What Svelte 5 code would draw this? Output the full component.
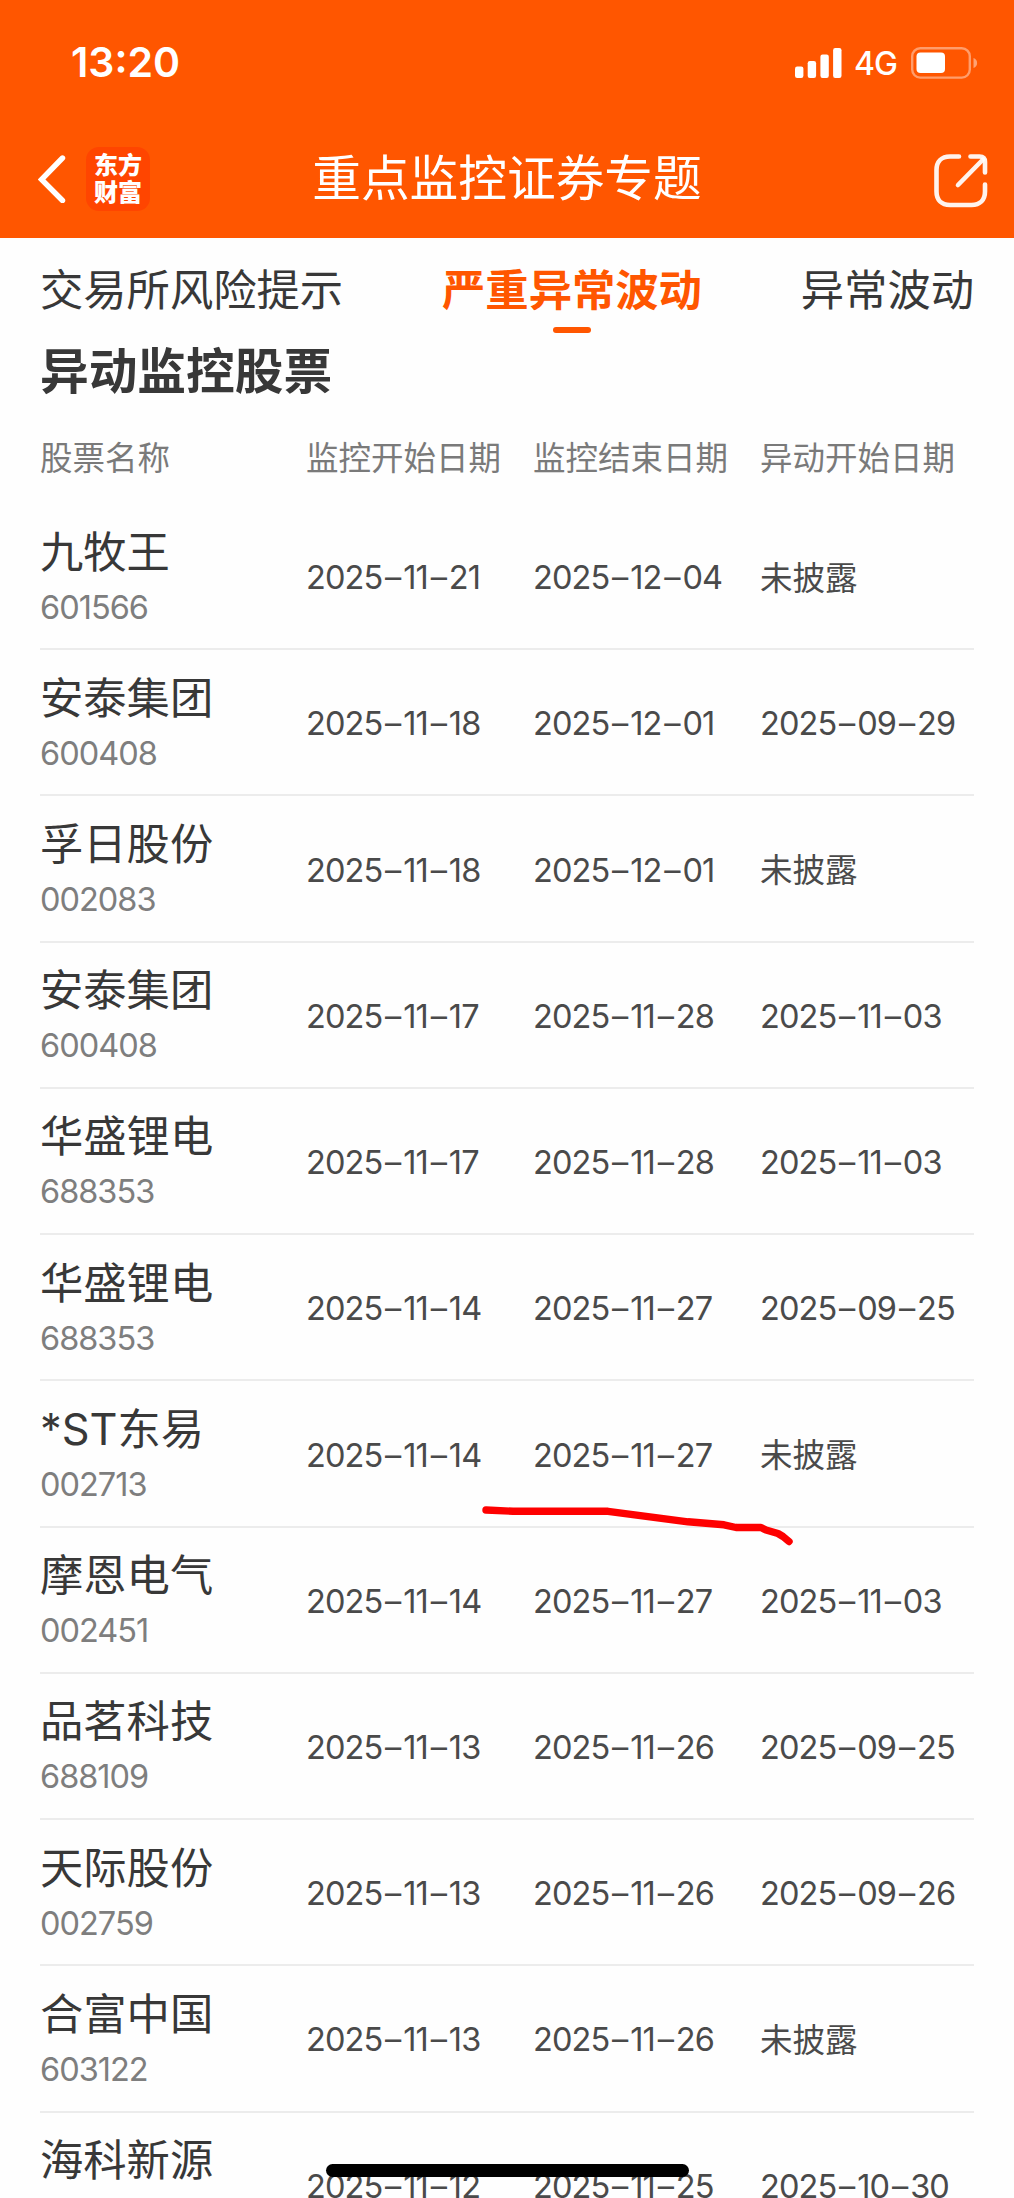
<script lang="ts">
  type Stock = { name: string; code?: string; start: string; end: string; moved?: string };

  const tabs = ["交易所风险提示", "严重异常波动", "异常波动"];
  const columns = ["股票名称", "监控开始日期", "监控结束日期", "异动开始日期"];

  const stocks: Stock[] = [
    { name: "九牧王", code: "601566", start: "2025-11-21", end: "2025-12-04" },
    { name: "安泰集团", code: "600408", start: "2025-11-18", end: "2025-12-01", moved: "2025-09-29" },
    { name: "孚日股份", code: "002083", start: "2025-11-18", end: "2025-12-01" },
    { name: "安泰集团", code: "600408", start: "2025-11-17", end: "2025-11-28", moved: "2025-11-03" },
    { name: "华盛锂电", code: "688353", start: "2025-11-17", end: "2025-11-28", moved: "2025-11-03" },
    { name: "华盛锂电", code: "688353", start: "2025-11-14", end: "2025-11-27", moved: "2025-09-25" },
    { name: "*ST东易", code: "002713", start: "2025-11-14", end: "2025-11-27" },
    { name: "摩恩电气", code: "002451", start: "2025-11-14", end: "2025-11-27", moved: "2025-11-03" },
    { name: "品茗科技", code: "688109", start: "2025-11-13", end: "2025-11-26", moved: "2025-09-25" },
    { name: "天际股份", code: "002759", start: "2025-11-13", end: "2025-11-26", moved: "2025-09-26" },
    { name: "合富中国", code: "603122", start: "2025-11-13", end: "2025-11-26" },
    { name: "海科新源", start: "2025-11-12", end: "2025-11-25", moved: "2025-10-30" },
  ];

  let active = $state(1);
</script>

{#snippet date(value: string)}
  <span class="date">{#each value.split("-") as part, i}{#if i > 0}<span class="dash">–</span>{/if}{part}{/each}</span>
{/snippet}

<div class="screen">
  <header>
    <div class="status">
      <span class="time">13:20</span>
      <div class="indicators">
        <svg class="signal" width="47" height="30" viewBox="0 0 47 30" fill="#fff">
          <rect x="0" y="18.5" width="8.4" height="11.5" rx="2.2" />
          <rect x="12.7" y="13" width="8.4" height="17" rx="2.2" />
          <rect x="25.4" y="6.5" width="8.4" height="23.5" rx="2.2" />
          <rect x="38.1" y="0" width="8.4" height="30" rx="2.2" />
        </svg>
        <span class="network">4G</span>
        <svg class="battery" width="67" height="32" viewBox="0 0 67 32">
          <rect x="1.2" y="1.2" width="57.6" height="29.4" rx="8" fill="none" stroke="#fff" stroke-opacity=".42" stroke-width="2.4" />
          <rect x="5.5" y="5.5" width="28.5" height="20.5" rx="4" fill="#fff" />
          <path d="M62.5 11c2.4.8 3.6 2.6 3.6 5s-1.2 4.2-3.6 5z" fill="#fff" fill-opacity=".45" />
        </svg>
      </div>
    </div>
    <div class="nav">
      <div class="left">
        <svg width="28" height="48" viewBox="0 0 28 48" fill="none" stroke="#fff" stroke-width="5.4" stroke-linecap="round">
          <path d="M24.5 3L3.5 24.5L24.5 45.5" />
        </svg>
        <div class="logo"><span>东方</span><span>财富</span></div>
      </div>
      <h1>重点监控证券专题</h1>
      <svg class="share" width="56" height="56" viewBox="0 0 56 56" fill="none" stroke="#fff" stroke-opacity=".93" stroke-width="4.6" stroke-linecap="round">
        <path d="M26 3.5H17C8.5 3.5 3.5 8.5 3.5 17V38.5C3.5 47 8.5 52 17 52H38.5C47 52 52 47 52 38.5V31.5" />
        <path d="M37.5 3.5H46.5Q52 3.5 52 9V19.5" />
        <path d="M25 32L50 6.5" />
      </svg>
    </div>
  </header>

  <nav class="tabs">
    {#each tabs as tab, i (tab)}
      <button class:active={i === active} onclick={() => (active = i)}>{tab}</button>
    {/each}
  </nav>

  <h2>异动监控股票</h2>

  <div class="table">
    <div class="row head">
      {#each columns as column (column)}
        <span>{column}</span>
      {/each}
    </div>
    {#each stocks as stock, i (i)}
      <div class="row">
        <div class="stock">
          <span class="name">{stock.name}</span>
          {#if stock.code}<span class="code">{stock.code}</span>{/if}
        </div>
        {@render date(stock.start)}
        {@render date(stock.end)}
        {#if stock.moved}
          {@render date(stock.moved)}
        {:else}
          <span class="undisclosed">未披露</span>
        {/if}
      </div>
    {/each}
  </div>

  <!-- hand-drawn marker stroke -->
  <svg class="marker" width="312" height="44" viewBox="0 0 312 44" fill="none" stroke="#fe0000" stroke-width="7.4" stroke-linecap="round" stroke-linejoin="round">
    <path d="M4 4L31 5.3H126L206 15.8L242 18.8L254 21.5H279L284 24L296 27.5L301 30.5L307 35.5" />
  </svg>
  <div class="home-bar"></div>
</div>

<style>
  :global(body) { margin: 0; background: #fefefe; }
  .screen {
    position: relative;
    width: 1014px;
    height: 2198px;
    overflow: hidden;
    background: #fefefe;
    color: #383838;
    font-family: Inter, "Noto Sans CJK SC", sans-serif;
  }
  header { height: 238px; background: #ff5600; color: #fff; }
  .status { display: flex; justify-content: space-between; height: 125px; padding: 0 36px 0 71px; align-items: center; box-sizing: border-box; }
  .time { font-size: 41px; font-weight: 600; line-height: 48px; padding-bottom: 1px; }
  .indicators { display: flex; align-items: center; }
  .network { margin-left: 12px; width: 57px; font-size: 32px; line-height: 32px; padding-top: 2px; font-weight: 500; letter-spacing: -1px; }
  .nav { display: grid; grid-template-columns: 1fr auto 1fr; align-items: center; height: 107px; }
  .left { display: flex; align-items: center; gap: 20px; padding-left: 38px; }
  .logo {
    display: flex;
    flex-direction: column;
    align-items: center;
    justify-content: center;
    width: 64px;
    height: 64px;
    border-radius: 13px;
    background: #ff4500;
    font-size: 24px;
    font-weight: 900;
    line-height: 27px;
  }
  h1 { margin: 0; font-size: 48.7px; font-weight: 400; line-height: 60px; }
  .share { justify-self: end; margin: 4px 25px 0 0; }
  .tabs { display: flex; justify-content: space-between; height: 105px; padding: 0 40px; }
  .tabs button {
    position: relative;
    padding: 0;
    border: 0;
    background: none;
    color: inherit;
    font: inherit;
    font-size: 43.3px;
    line-height: 105px;
  }
  .tabs .active { color: #ff5600; font-weight: 700; }
  .tabs .active::after {
    content: "";
    position: absolute;
    left: 50%;
    bottom: 10px;
    width: 38px;
    height: 6px;
    margin-left: -19px;
    border-radius: 3px;
    background: #ff5600;
  }
  h2 { margin: 0; padding-left: 40px; font-size: 48.7px; font-weight: 700; line-height: 58px; }
  .table { padding: 0 40px; }
  .row {
    display: grid;
    grid-template-columns: 266px 227px 227px 1fr;
    align-items: center;
    height: 146.24px;
    box-sizing: border-box;
    border-bottom: 2px solid #ececec;
    color: #4a4a4a;
    font-size: 32.5px;
    white-space: nowrap;
  }
  .row.head { height: 103px; padding-top: 5px; border: 0; color: #7a7a7a; }
  .stock { display: flex; flex-direction: column; align-self: start; padding-top: 19.5px; }
  .name { color: #383838; font-size: 43.3px; line-height: 56px; }
  .code { color: #7e7e7e; line-height: 55px; letter-spacing: -1px; }
  .date { padding-top: 3px; letter-spacing: -0.9px; }
  .dash { padding: 0 2.8px; }
  .undisclosed { padding-bottom: 2px; }
  .marker { position: absolute; left: 482px; top: 1506px; }
  .home-bar { position: absolute; left: 326px; top: 2164px; width: 363px; height: 13px; border-radius: 7px; background: #000; }
</style>
